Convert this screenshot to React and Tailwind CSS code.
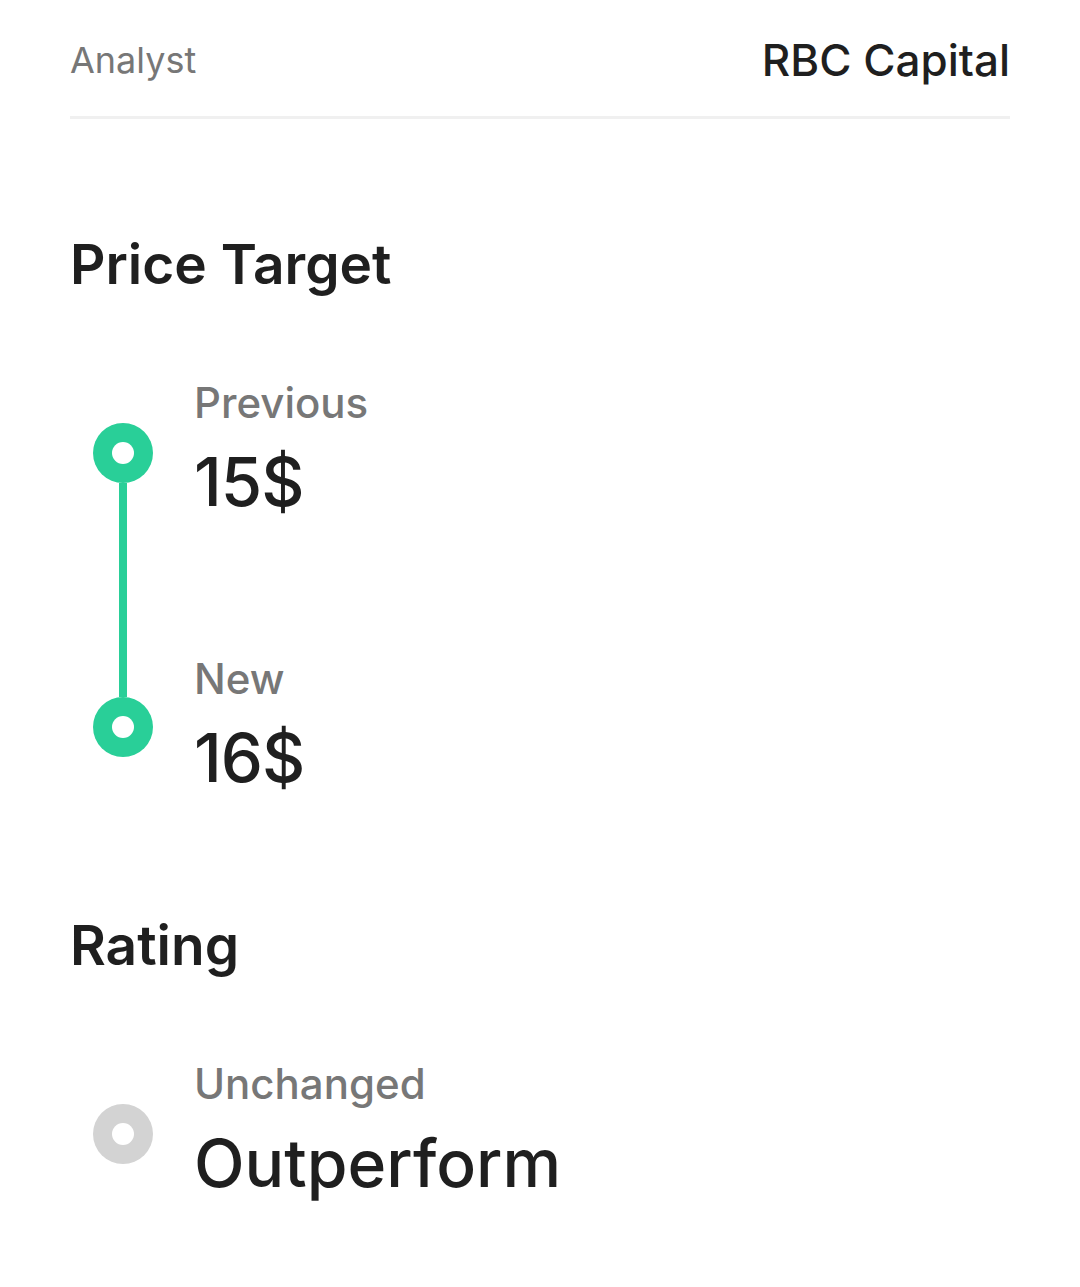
import React from "react";

const Dot = ({ color }) => (
  <div className={`w-[60px] h-[60px] rounded-full flex items-center justify-center ${color}`}>
    <div className="w-[22px] h-[22px] rounded-full bg-white" />
  </div>
);

const App = () => {
  return (
    <div className="w-[1080px] h-[1287px] bg-white px-[70px] text-[#1f1f1f]" style={{ fontFamily: "Inter, 'Noto Sans', sans-serif" }}>
      {/* analyst row */}
      <div className="flex items-center justify-between h-[119px] pt-[4px] border-b-[3px] border-[#f0f0f0]">
        <span className="text-[36px] text-[#777777]">Analyst</span>
        <span className="text-[44px] font-medium">RBC Capital</span>
      </div>

      <h2 className="mt-[118px] text-[55px] font-semibold leading-none">Price Target</h2>

      <div className="mt-[90px] flex">
        <div className="w-[124px] flex flex-col items-start pl-[23px]">
          <div className="h-[41px]" />
          <Dot color="bg-[#29cf98]" />
          <div className="ml-[26px] w-[8px] h-[214px] bg-[#29cf98]" />
          <Dot color="bg-[#29cf98]" />
        </div>
        <div className="flex flex-col">
          <div className="text-[42px] font-medium text-[#777777] leading-none">Previous</div>
          <div className="mt-[24px] text-[67px] font-medium leading-none tracking-[-1px]">15$</div>
          <div className="mt-[143px] text-[42px] font-medium text-[#777777] leading-none">New</div>
          <div className="mt-[24px] text-[67px] font-medium leading-none tracking-[-1px]">16$</div>
        </div>
      </div>

      <h2 className="mt-[127px] text-[55px] font-semibold leading-none">Rating</h2>

      <div className="mt-[90px] flex">
        <div className="w-[124px] flex flex-col items-start pl-[23px]">
          <div className="h-[41px]" />
          <Dot color="bg-[#d3d3d3]" />
        </div>
        <div className="flex flex-col">
          <div className="text-[42px] font-medium text-[#777777] leading-none">Unchanged</div>
          <div className="mt-[25px] text-[66px] font-medium leading-none">Outperform</div>
        </div>
      </div>
    </div>
  );
};

export default App;
